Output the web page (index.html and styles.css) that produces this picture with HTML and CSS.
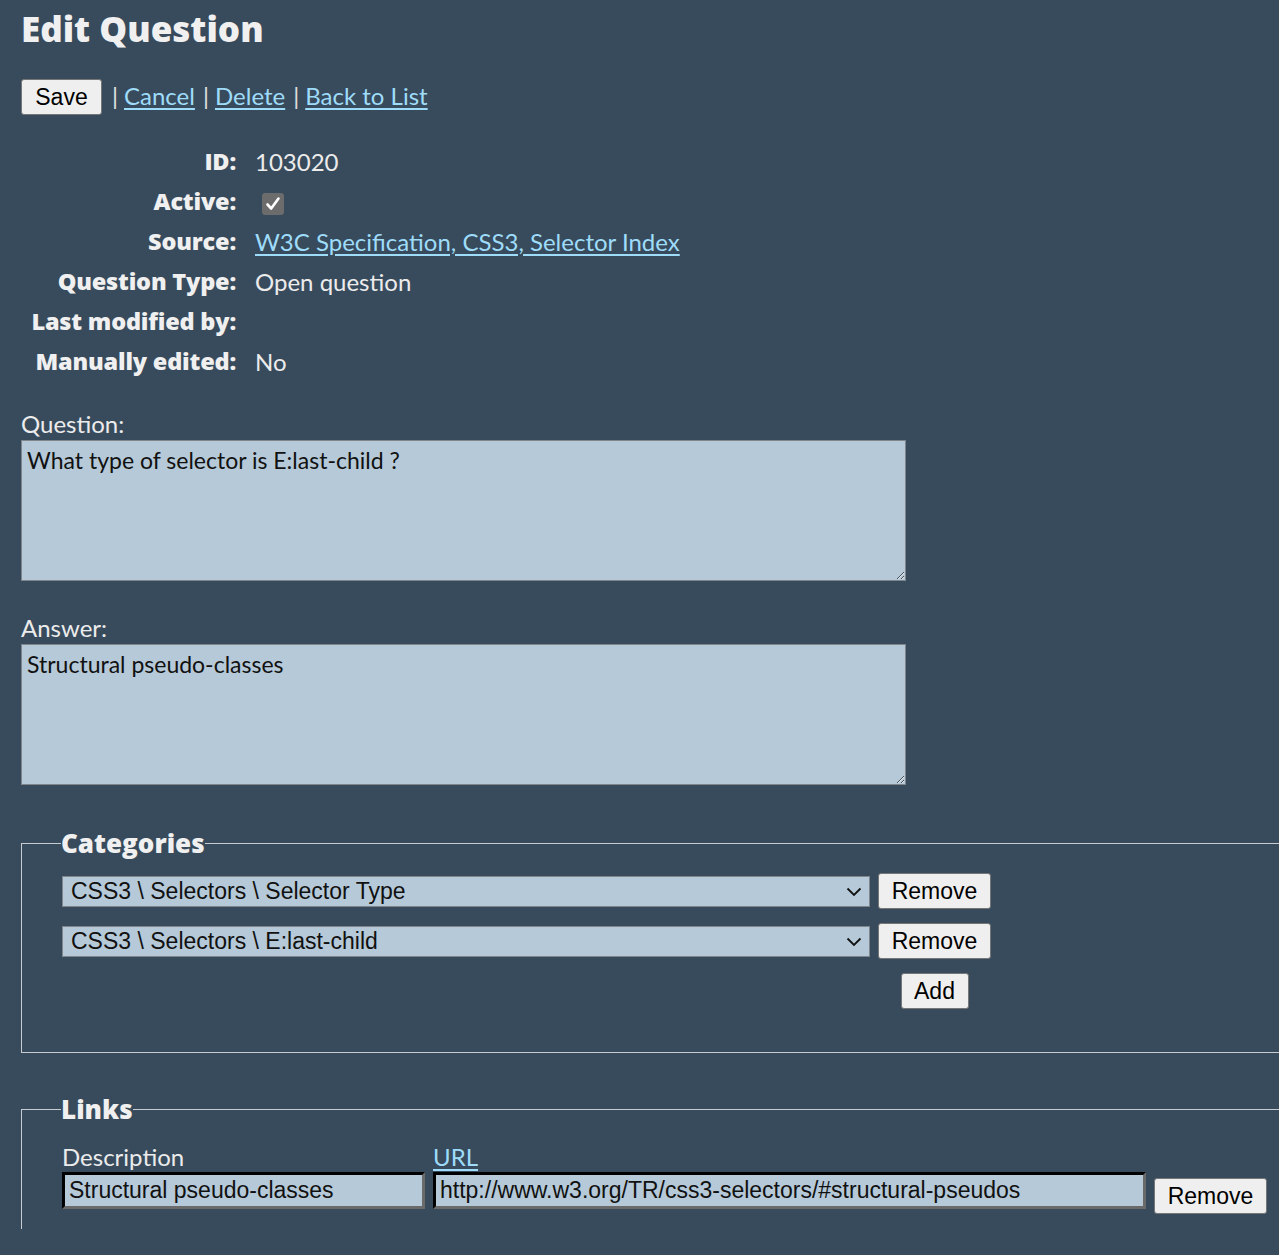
FILE: index.html
```html
<!DOCTYPE html>
<html lang="en">
<head>
<meta charset="utf-8">
<title>Edit Question</title>
<link rel="stylesheet" href="styles.css">
</head>
<body>
<div class="page">
  <h1 class="title">Edit Question</h1>
  <div class="actions">
    <button class="btn" type="button">Save</button>
    <span class="sep">|</span> <a href="#" class="link">Cancel</a>
    <span class="sep">|</span> <a href="#" class="link">Delete</a>
    <span class="sep">|</span> <a href="#" class="link">Back to List</a>
  </div>

  <div class="details">
    <div class="dt">ID:</div><div class="dd">103020</div>
    <div class="dt">Active:</div>
    <div class="dd"><span class="check"><svg viewBox="0 0 22 22" width="22" height="22"><rect x="0" y="0" width="22" height="22" rx="3" fill="#6c6c6c"/><path d="M5.5 11.5 L9.2 15.5 L16.5 5.5" fill="none" stroke="#ffffff" stroke-width="2.6" stroke-linecap="round" stroke-linejoin="round"/></svg></span></div>
    <div class="dt">Source:</div><div class="dd"><a href="#" class="link">W3C Specification, CSS3, Selector Index</a></div>
    <div class="dt">Question Type:</div><div class="dd">Open question</div>
    <div class="dt">Last modified by:</div><div class="dd"></div>
    <div class="dt">Manually edited:</div><div class="dd">No</div>
  </div>

  <div class="field">
    <label class="flabel">Question:</label>
    <textarea class="area">What type of selector is E:last-child ?</textarea>
  </div>
  <div class="field">
    <label class="flabel">Answer:</label>
    <textarea class="area">Structural pseudo-classes</textarea>
  </div>

  <fieldset class="box cats">
    <legend class="legend">Categories</legend>
    <div class="catgrid">
      <span class="selwrap"><select class="sel"><option>CSS3 \ Selectors \ Selector Type</option></select><svg class="chev" viewBox="0 0 16 10" width="16" height="10"><path d="M1.5 1.5 L8 8 L14.5 1.5" fill="none" stroke="#111" stroke-width="1.8"/></svg></span>
      <button class="btn" type="button">Remove</button>
      <span class="selwrap"><select class="sel"><option>CSS3 \ Selectors \ E:last-child</option></select><svg class="chev" viewBox="0 0 16 10" width="16" height="10"><path d="M1.5 1.5 L8 8 L14.5 1.5" fill="none" stroke="#111" stroke-width="1.8"/></svg></span>
      <button class="btn" type="button">Remove</button>
      <span></span>
      <button class="btn add" type="button">Add</button>
    </div>
  </fieldset>

  <fieldset class="box links">
    <legend class="legend">Links</legend>
    <div class="linkgrid">
      <div class="lcell">
        <div class="lhead">Description</div>
        <input class="txt desc" type="text" value="Structural pseudo-classes">
      </div>
      <div class="lcell">
        <div class="lhead"><a href="#" class="link">URL</a></div>
        <input class="txt url" type="text" value="http://www.w3.org/TR/css3-selectors/#structural-pseudos">
      </div>
      <button class="btn lrem" type="button">Remove</button>
    </div>
  </fieldset>
</div>
</body>
</html>
```

FILE: styles.css
```css
html, body {
  margin: 0;
  padding: 0;
  background: #384b5c;
  overflow-x: hidden;
}
body {
  color: #ececec;
  font-family: "Lato", "Open Sans", sans-serif;
  font-size: 24px;
}
.page {
  padding: 0 0 0 21px;
}
.title {
  margin: 0;
  padding-top: 5px;
  font-family: "Open Sans", sans-serif;
  font-size: 35px;
  font-weight: 800;
  line-height: 48px;
  color: #f0f0f0;
}
.actions {
  margin-top: 26px;
  display: flex;
  align-items: baseline;
  gap: 6px;
  height: 36px;
}
.sep { color: #e0e0e0; margin-left: 2px; }
.link { color: #9edcfa; text-decoration: underline; text-underline-offset: 3px; }
.btn {
  font-family: "Liberation Sans", Arial, sans-serif;
  font-size: 23px;
  color: #000;
  background: #efefef;
  border: 1px solid #767676;
  border-radius: 3px;
  height: 36px;
  padding: 0 10px;
}
.actions .btn { width: 81px; margin-right: 2px; }
.details {
  margin-top: 26px;
  display: grid;
  grid-template-columns: 215px auto;
  column-gap: 19px;
  grid-auto-rows: 40px;
  align-items: center;
}
.dt {
  text-align: right;
  font-family: "Open Sans", sans-serif;
  font-weight: 800;
  font-size: 23.5px;
  letter-spacing: -0.2px;
  color: #f0f0f0;
}
.dd { color: #ececec; }
.check { display: inline-block; width: 22px; height: 22px; vertical-align: middle; margin-left: 7px; }
.check svg { display: block; }
.field { margin-top: 29px; }
.field + .field { margin-top: 33px; }
.flabel { display: block; line-height: 28px; }
.area {
  display: block;
  box-sizing: border-box;
  width: 885px;
  height: 141px;
  margin-top: 2px;
  background: #b5c9d8;
  border: 1px solid #7e868c;
  color: #111;
  font-family: "Lato", "Open Sans", sans-serif;
  font-size: 23px;
  padding: 5px 5px;
  resize: both;
}
.box {
  border: 1px solid #c8ccd0;
  margin: 0;
  width: 1320px;
  box-sizing: border-box;
  padding: 12px 0 0 40px;
}
.cats { margin-top: 40px; padding-bottom: 43px; }
.legend {
  padding: 0;
  font-family: "Open Sans", sans-serif;
  font-size: 26px;
  font-weight: 800;
  color: #f0f0f0;
  margin-left: -1px;
}
.catgrid {
  display: grid;
  grid-template-columns: 808px 113px;
  column-gap: 8px;
  row-gap: 14px;
  align-items: center;
  justify-items: center;
}
.selwrap { position: relative; display: block; width: 808px; height: 31px; }
.sel {
  -webkit-appearance: none;
  appearance: none;
  display: block;
  box-sizing: border-box;
  width: 808px;
  height: 31px;
  background: #b5c9d8;
  border: 1px solid #7e868c;
  font-family: "Liberation Sans", Arial, sans-serif;
  font-size: 23px;
  color: #111;
  padding: 0 30px 0 8px;
  border-radius: 0;
}
.chev { position: absolute; right: 8px; top: 11px; pointer-events: none; }
.catgrid .btn { width: 113px; }
.catgrid .add { width: 68px; }
.links { margin-top: 38px; border-bottom: none; padding-top: 15px; padding-bottom: 20px; }
.linkgrid {
  display: flex;
  align-items: flex-end;
  gap: 8px;
}
.lhead { line-height: 30px; }
.txt {
  box-sizing: border-box;
  height: 37px;
  background: #b5c9d8;
  border: 3px inset #6a6a6a;
  border-top-color: #2a2a2a;
  border-left-color: #2a2a2a;
  font-family: "Liberation Sans", Arial, sans-serif;
  font-size: 23px;
  color: #111;
  padding: 0 4px;
  display: block;
}
.desc { width: 363px; }
.url { width: 713px; }
.lrem { width: 113px; margin-bottom: -5px; }
```
